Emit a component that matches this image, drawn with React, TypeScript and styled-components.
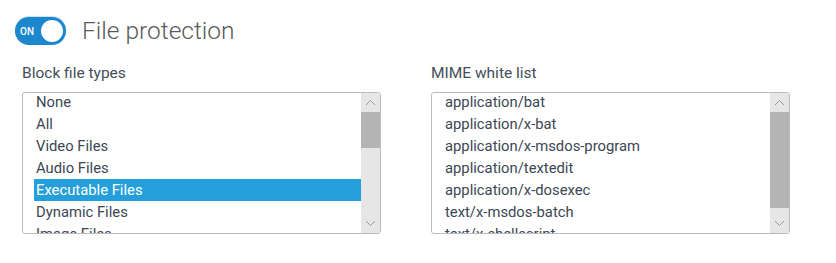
import styled, { createGlobalStyle } from "styled-components";

const GlobalStyle = createGlobalStyle`
  html, body {
    margin: 0;
    padding: 0;
    background: #ffffff;
  }
  body {
    font-family: Roboto, "Liberation Sans", Arial, sans-serif;
    color: #3c4753;
  }
`;

const fileTypes = [
  "None",
  "All",
  "Video Files",
  "Audio Files",
  "Executable Files",
  "Dynamic Files",
  "Image Files",
];

const mimeTypes = [
  "application/bat",
  "application/x-bat",
  "application/x-msdos-program",
  "application/textedit",
  "application/x-dosexec",
  "text/x-msdos-batch",
  "text/x-shellscript",
];

function Chevron({ up }: { up?: boolean }) {
  return (
    <svg width="11" height="7" viewBox="0 0 11 7">
      <path
        d={up ? "M1 6 L5.5 1.5 L10 6" : "M1 1 L5.5 5.5 L10 1"}
        fill="none"
        stroke="#9a9a9a"
        strokeWidth="1"
      />
    </svg>
  );
}

interface ListProps {
  items: string[];
  selected?: number;
  thumbTop: number;
  thumbHeight: number;
}

function ListBox({ items, selected, thumbTop, thumbHeight }: ListProps) {
  return (
    <Box>
      <Items>
        {items.map((item, i) => (
          <Item key={item} $selected={i === selected}>
            {item}
          </Item>
        ))}
      </Items>
      <Scrollbar>
        <ArrowButton>
          <Chevron up />
        </ArrowButton>
        <Track>
          <Thumb style={{ marginTop: thumbTop, height: thumbHeight }} />
        </Track>
        <ArrowButton>
          <Chevron />
        </ArrowButton>
      </Scrollbar>
    </Box>
  );
}

export default function App() {
  return (
    <>
      <GlobalStyle />
      <Page>
        <Header>
          <Toggle>
            <ToggleLabel>ON</ToggleLabel>
            <Knob />
          </Toggle>
          <Title>File protection</Title>
        </Header>
        <Columns>
          <Field>
            <Label>Block file types</Label>
            <ListBox items={fileTypes} selected={4} thumbTop={0} thumbHeight={36} />
          </Field>
          <Field>
            <Label>MIME white list</Label>
            <ListBox items={mimeTypes} thumbTop={0} thumbHeight={96} />
          </Field>
        </Columns>
      </Page>
    </>
  );
}

const Page = styled.div`
  padding: 17px 0 0 15px;
  width: 836px;
  height: 263px;
  box-sizing: border-box;
`;

const Header = styled.div`
  display: flex;
  align-items: center;
  gap: 16px;
  height: 28px;
`;

const Toggle = styled.div`
  width: 51px;
  height: 28px;
  box-sizing: border-box;
  border-radius: 14px;
  background: #1c87cd;
  display: flex;
  align-items: center;
  justify-content: space-between;
  padding: 0 3px 0 5px;
  box-shadow: 0 -1px 1px rgba(28, 135, 205, 0.25);
`;

const ToggleLabel = styled.span`
  color: #ffffff;
  font-size: 10px;
  font-weight: 500;
  letter-spacing: 0.2px;
`;

const Knob = styled.div`
  width: 22px;
  height: 22px;
  border-radius: 50%;
  background: #ffffff;
`;

const Title = styled.h1`
  margin: 0;
  font-size: 24.5px;
  font-weight: 300;
  color: #595959;
  line-height: 28px;
`;

const Columns = styled.div`
  display: flex;
  gap: 50px;
  margin: 19px 0 0 7px;
`;

const Field = styled.div`
  display: flex;
  flex-direction: column;
  width: 359px;
`;

const Label = styled.div`
  font-size: 15.5px;
  line-height: 18px;
  color: #444e58;
  margin-bottom: 10px;
`;

const Box = styled.div`
  height: 142px;
  box-sizing: border-box;
  border: 1px solid #b8bcc1;
  border-radius: 3px;
  display: flex;
  overflow: hidden;
`;

const Items = styled.div`
  flex: 1;
  overflow: hidden;
  padding-left: 11px;
  margin-top: -2px;
`;

const Item = styled.div<{ $selected?: boolean }>`
  height: 22px;
  line-height: 22px;
  padding-left: 2px;
  font-size: 14.8px;
  white-space: nowrap;
  color: ${(p) => (p.$selected ? "#ffffff" : "#3c4753")};
  background: ${(p) => (p.$selected ? "#249fdb" : "transparent")};
`;

const Scrollbar = styled.div`
  width: 19px;
  display: flex;
  flex-direction: column;
  background: #e6e6e6;
`;

const ArrowButton = styled.div`
  height: 19px;
  display: flex;
  align-items: center;
  justify-content: center;
`;

const Track = styled.div`
  flex: 1;
  display: flex;
  flex-direction: column;
`;

const Thumb = styled.div`
  background: #b4b4b4;
`;
